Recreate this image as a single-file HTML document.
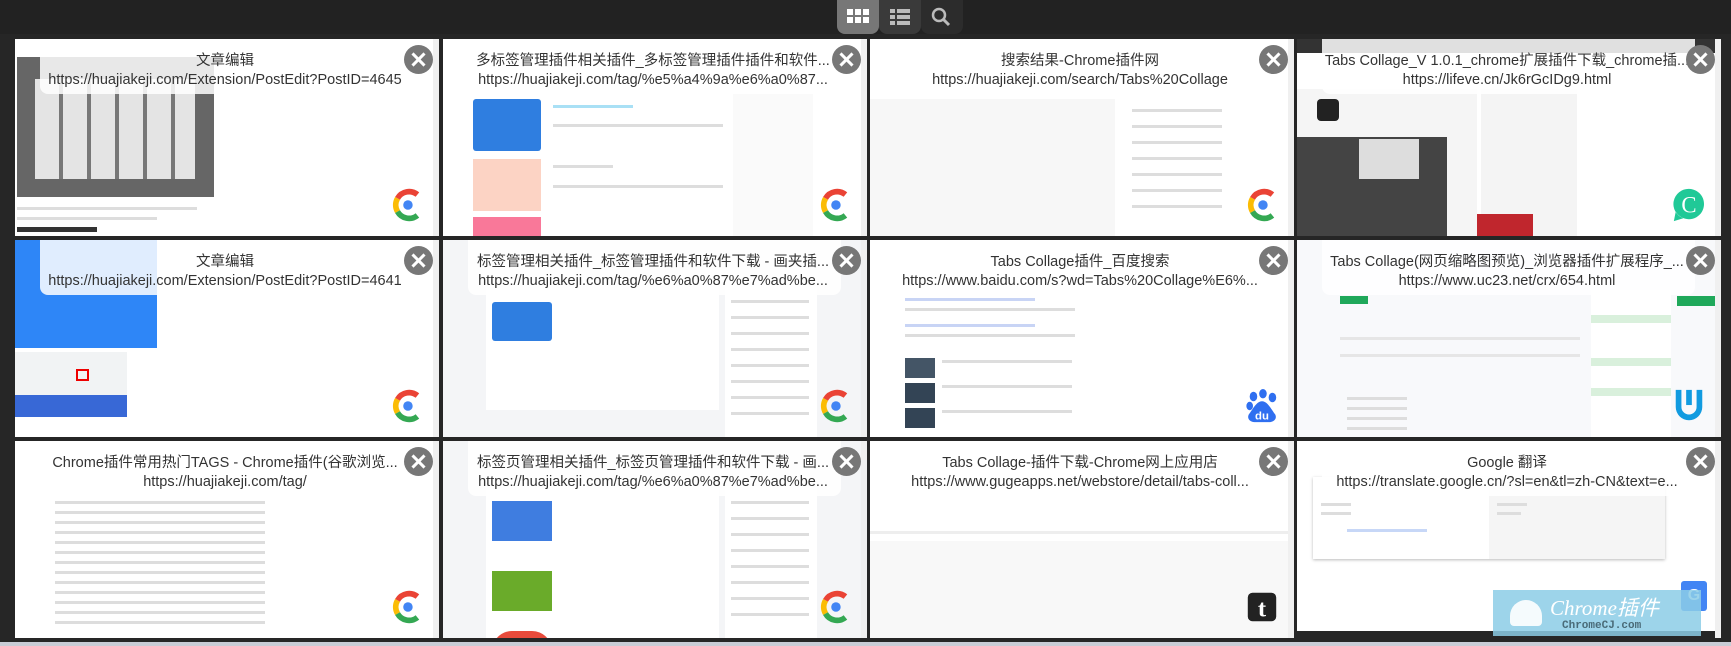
<!DOCTYPE html>
<html><head><meta charset="utf-8">
<style>
*{margin:0;padding:0;box-sizing:border-box}
body{width:1731px;height:646px;background:#262626;position:relative;overflow:hidden;font-family:"Liberation Sans","Noto Sans CJK SC",sans-serif}
.top{position:absolute;left:0;top:0;width:1731px;height:34px;background:#222}
.btn{position:absolute;top:0;height:34px;width:42px;border-radius:0 0 8px 8px}
.cell{position:absolute;width:424px;height:197px;background:#fff;overflow:hidden}
.tb{position:absolute;left:25px;top:0;width:373px;height:55px;background:rgba(255,255,255,.85);border-radius:0 0 8px 8px}
.t1,.t2{position:absolute;left:18px;width:384px;text-align:center;white-space:nowrap;overflow:hidden;color:#333;font-size:14.5px;line-height:18px}
.t1{top:13px}.t2{top:32px}
.x{position:absolute;right:6px;top:6px;width:29px;height:29px;border-radius:50%;background:#777}
.x:before,.x:after{content:"";position:absolute;left:6px;top:13px;width:17px;height:3px;background:#fff;transform:rotate(45deg)}
.x:after{transform:rotate(-45deg)}
.fav{position:absolute;right:14px;bottom:13px;width:36px;height:36px}
.r{position:absolute}
.ln{position:absolute;height:3px;background:#ddd}
.sb{position:absolute;right:0;top:0;width:6px;height:197px;background:#f0f0f0}
</style></head><body>
<div class="top"></div>
<div class="btn" style="left:837px;background:#777">
<svg width="42" height="34"><g fill="#fff"><rect x="10" y="9" width="6" height="6"/><rect x="18" y="9" width="6" height="6"/><rect x="26" y="9" width="6" height="6"/><rect x="10" y="17" width="6" height="6"/><rect x="18" y="17" width="6" height="6"/><rect x="26" y="17" width="6" height="6"/></g></svg></div>
<div class="btn" style="left:879px;background:#3a3a3a">
<svg width="42" height="34"><g fill="#bbb"><rect x="11" y="9" width="5" height="4"/><rect x="18" y="9" width="13" height="4"/><rect x="11" y="15" width="5" height="4"/><rect x="18" y="15" width="13" height="4"/><rect x="11" y="21" width="5" height="4"/><rect x="18" y="21" width="13" height="4"/></g></svg></div>
<div class="btn" style="left:921px;background:#2c2c2c">
<svg width="42" height="34"><circle cx="18" cy="15" r="6" fill="none" stroke="#bbb" stroke-width="2.5"/><line x1="22" y1="19" x2="28" y2="25" stroke="#bbb" stroke-width="3"/></svg></div>

<svg width="0" height="0" style="position:absolute"><defs>
<g id="chr"><path d="M29 8 A14 14 0 0 0 8 12" fill="none" stroke="#ea4335" stroke-width="6"/><path d="M8 12 A14 14 0 0 0 8 26" fill="none" stroke="#fbbc05" stroke-width="6"/><path d="M8 26 A14 14 0 0 0 29 30" fill="none" stroke="#34a853" stroke-width="6"/><circle cx="19" cy="19" r="5" fill="#4285f4"/></g>
</defs></svg>

<!-- row 1 -->
<div class="cell" style="left:15px;top:39px">
<div class="r" style="left:2px;top:18px;width:197px;height:140px;background:#666"></div>
<div class="r" style="left:20px;top:40px;width:160px;height:100px;background:repeating-linear-gradient(90deg,#e4e4e4 0 24px,#777 24px 28px),#ddd"></div>
<div class="ln" style="left:2px;top:168px;width:180px"></div><div class="ln" style="left:2px;top:178px;width:140px"></div><div class="r" style="left:2px;top:188px;width:80px;height:5px;background:#333"></div>
<div class="tb"></div><div class="t1">文章编辑</div><div class="t2">https://huajiakeji.com/Extension/PostEdit?PostID=4645</div>
<div class="sb"></div><div class="x"></div><svg class="fav" viewBox="0 0 36 38"><use href="#chr"/></svg></div>

<div class="cell" style="left:443px;top:39px">
<div class="r" style="left:30px;top:60px;width:68px;height:52px;background:#2f7ee0;border-radius:3px"></div>
<div class="r" style="left:30px;top:120px;width:68px;height:52px;background:#fcd3c4"></div>
<div class="r" style="left:30px;top:178px;width:68px;height:30px;background:#f97899"></div>
<div class="ln" style="left:110px;top:66px;width:80px;background:#a9e0f5"></div><div class="ln" style="left:110px;top:85px;width:170px"></div><div class="ln" style="left:110px;top:126px;width:60px"></div><div class="ln" style="left:110px;top:146px;width:170px"></div>
<div class="r" style="left:290px;top:0;width:80px;height:197px;background:#fafafa"></div>
<div class="tb"></div><div class="t1">多标签管理插件相关插件_多标签管理插件插件和软件...</div><div class="t2">https://huajiakeji.com/tag/%e5%a4%9a%e6%a0%87...</div>
<div class="sb"></div><div class="x"></div><svg class="fav" viewBox="0 0 36 38"><use href="#chr"/></svg></div>

<div class="cell" style="left:870px;top:39px">
<div class="r" style="left:0;top:60px;width:245px;height:137px;background:#f7f7f7"></div>
<div class="ln" style="left:262px;top:70px;width:90px"></div><div class="ln" style="left:262px;top:86px;width:90px"></div><div class="ln" style="left:262px;top:102px;width:90px"></div><div class="ln" style="left:262px;top:118px;width:90px"></div><div class="ln" style="left:262px;top:134px;width:90px"></div><div class="ln" style="left:262px;top:150px;width:90px"></div><div class="ln" style="left:262px;top:166px;width:90px"></div>
<div class="tb"></div><div class="t1">搜索结果-Chrome插件网</div><div class="t2">https://huajiakeji.com/search/Tabs%20Collage</div>
<div class="sb"></div><div class="x"></div><svg class="fav" viewBox="0 0 36 38"><use href="#chr"/></svg></div>

<div class="cell" style="left:1297px;top:39px">
<div class="r" style="left:0;top:0;width:424px;height:14px;background:#333"></div>
<div class="r" style="left:0;top:50px;width:180px;height:147px;background:#f5f5f5"></div>
<div class="r" style="left:0;top:98px;width:150px;height:99px;background:#444"></div>
<div class="r" style="left:62px;top:100px;width:60px;height:40px;background:#ddd"></div>
<div class="r" style="left:184px;top:50px;width:96px;height:147px;background:#f4f4f4"></div>
<div class="r" style="left:20px;top:60px;width:22px;height:22px;background:#222;border-radius:4px"></div>
<div class="tb"></div><div class="t1">Tabs Collage_V 1.0.1_chrome扩展插件下载_chrome插...</div><div class="t2">https://lifeve.cn/Jk6rGcIDg9.html</div>
<div class="sb" style="background:#f0f0f0"></div><div class="x"></div>
<svg class="fav" viewBox="0 0 36 38"><path d="M18 2a16 16 0 1 1-14 24l-2 10 10-3A16 16 0 0 1 18 2z" fill="#20c997"/><text x="18" y="27" font-size="24" fill="#fff" text-anchor="middle" font-family="Liberation Serif">C</text></svg>
<div class="r" style="left:180px;top:175px;width:56px;height:22px;background:#c0262d"></div></div>

<!-- row 2 -->
<div class="cell" style="left:15px;top:240px">
<div class="r" style="left:0;top:0;width:142px;height:108px;background:#2e86f7"></div>
<div class="r" style="left:0;top:112px;width:112px;height:50px;background:#f1f3f4"></div>
<div class="r" style="left:61px;top:129px;width:13px;height:12px;border:2px solid #e00"></div>
<div class="r" style="left:0;top:155px;width:112px;height:22px;background:#3868d6"></div>
<div class="tb"></div><div class="t1">文章编辑</div><div class="t2">https://huajiakeji.com/Extension/PostEdit?PostID=4641</div>
<div class="sb"></div><div class="x"></div><svg class="fav" viewBox="0 0 36 38"><use href="#chr"/></svg></div>

<div class="cell" style="left:443px;top:240px;background:#f4f5f7">
<div class="r" style="left:43px;top:40px;width:233px;height:130px;background:#fff"></div>
<div class="r" style="left:49px;top:62px;width:60px;height:39px;background:#2f7ee0;border-radius:3px"></div>
<div class="r" style="left:282px;top:40px;width:92px;height:157px;background:#fff"></div>
<div class="ln" style="left:288px;top:60px;width:78px"></div><div class="ln" style="left:288px;top:76px;width:78px"></div><div class="ln" style="left:288px;top:92px;width:78px"></div><div class="ln" style="left:288px;top:108px;width:78px"></div><div class="ln" style="left:288px;top:124px;width:78px"></div><div class="ln" style="left:288px;top:140px;width:78px"></div><div class="ln" style="left:288px;top:156px;width:78px"></div><div class="ln" style="left:288px;top:172px;width:78px"></div>
<div class="tb"></div><div class="t1">标签管理相关插件_标签管理插件和软件下载 - 画夹插...</div><div class="t2">https://huajiakeji.com/tag/%e6%a0%87%e7%ad%be...</div>
<div class="sb"></div><div class="x"></div><svg class="fav" viewBox="0 0 36 38"><use href="#chr"/></svg></div>

<div class="cell" style="left:870px;top:240px">
<div class="ln" style="left:35px;top:58px;width:130px;background:#c8d4f5"></div><div class="ln" style="left:35px;top:68px;width:170px"></div><div class="ln" style="left:35px;top:84px;width:130px;background:#c8d4f5"></div><div class="ln" style="left:35px;top:94px;width:170px"></div>
<div class="r" style="left:35px;top:118px;width:30px;height:20px;background:#456"></div><div class="r" style="left:35px;top:143px;width:30px;height:20px;background:#345"></div><div class="r" style="left:35px;top:168px;width:30px;height:20px;background:#345"></div>
<div class="ln" style="left:72px;top:120px;width:130px"></div><div class="ln" style="left:72px;top:145px;width:130px"></div><div class="ln" style="left:72px;top:170px;width:130px"></div>
<div class="tb"></div><div class="t1">Tabs Collage插件_百度搜索</div><div class="t2">https://www.baidu.com/s?wd=Tabs%20Collage%E6%...</div>
<div class="sb"></div><div class="x"></div>
<svg class="fav" viewBox="0 0 36 38"><g fill="#2f6ff0"><ellipse cx="9" cy="9" rx="4" ry="5"/><ellipse cx="19" cy="6" rx="4" ry="5"/><ellipse cx="29" cy="10" rx="4" ry="5"/><ellipse cx="5" cy="19" rx="3.5" ry="4.5"/><path d="M18 14c-6 0-10 9-14 14-2 4 1 8 6 8h16c5 0 8-4 6-8-4-5-8-14-14-14z"/></g><text x="18" y="33" font-size="12" font-weight="bold" fill="#fff" text-anchor="middle">du</text></svg></div>

<div class="cell" style="left:1297px;top:240px;background:#f8f9fb">
<div class="r" style="left:43px;top:56px;width:28px;height:8px;background:#1fa85a"></div>
<div class="ln" style="left:43px;top:97px;width:240px;background:#e6e6e6"></div><div class="ln" style="left:43px;top:114px;width:240px;background:#e6e6e6"></div>
<div class="ln" style="left:50px;top:157px;width:60px"></div><div class="ln" style="left:50px;top:167px;width:60px"></div><div class="ln" style="left:50px;top:177px;width:60px"></div><div class="ln" style="left:50px;top:187px;width:60px"></div>
<div class="r" style="left:294px;top:50px;width:80px;height:147px;background:#fff"></div>
<div class="r" style="left:294px;top:75px;width:80px;height:8px;background:#d9f0dc"></div><div class="r" style="left:294px;top:118px;width:80px;height:8px;background:#d9f0dc"></div><div class="r" style="left:294px;top:148px;width:80px;height:8px;background:#d9f0dc"></div>
<div class="r" style="left:380px;top:56px;width:38px;height:10px;background:#1fa85a"></div>
<div class="tb"></div><div class="t1">Tabs Collage(网页缩略图预览)_浏览器插件扩展程序_...</div><div class="t2">https://www.uc23.net/crx/654.html</div>
<div class="sb"></div><div class="x"></div>
<svg class="fav" viewBox="0 0 36 38"><path d="M4 2v18a14 14 0 0 0 28 0V2h-6v18a8 8 0 0 1-16 0V2z" fill="#119be0"/><path d="M15 2v16h6V2z" fill="#119be0"/></svg></div>

<!-- row 3 -->
<div class="cell" style="left:15px;top:441px">
<div class="ln" style="left:40px;top:60px;width:210px"></div><div class="ln" style="left:40px;top:70px;width:210px"></div><div class="ln" style="left:40px;top:80px;width:210px"></div><div class="ln" style="left:40px;top:90px;width:210px"></div><div class="ln" style="left:40px;top:100px;width:210px"></div><div class="ln" style="left:40px;top:110px;width:210px"></div><div class="ln" style="left:40px;top:120px;width:210px"></div><div class="ln" style="left:40px;top:130px;width:210px"></div><div class="ln" style="left:40px;top:140px;width:210px"></div><div class="ln" style="left:40px;top:150px;width:210px"></div><div class="ln" style="left:40px;top:160px;width:210px"></div><div class="ln" style="left:40px;top:170px;width:210px"></div><div class="ln" style="left:40px;top:180px;width:210px"></div>
<div class="tb"></div><div class="t1">Chrome插件常用热门TAGS - Chrome插件(谷歌浏览...</div><div class="t2">https://huajiakeji.com/tag/</div>
<div class="sb"></div><div class="x"></div><svg class="fav" viewBox="0 0 36 38"><use href="#chr"/></svg></div>

<div class="cell" style="left:443px;top:441px;background:#f4f5f7">
<div class="r" style="left:43px;top:45px;width:233px;height:152px;background:#fff"></div>
<div class="r" style="left:49px;top:60px;width:60px;height:40px;background:#3f7de0"></div>
<div class="r" style="left:49px;top:130px;width:60px;height:40px;background:#6aab2a"></div>
<div class="r" style="left:49px;top:190px;width:60px;height:20px;background:#e84a3b;border-radius:30px 30px 0 0"></div>
<div class="r" style="left:282px;top:45px;width:92px;height:152px;background:#fff"></div>
<div class="ln" style="left:288px;top:60px;width:78px"></div><div class="ln" style="left:288px;top:76px;width:78px"></div><div class="ln" style="left:288px;top:92px;width:78px"></div><div class="ln" style="left:288px;top:108px;width:78px"></div><div class="ln" style="left:288px;top:124px;width:78px"></div><div class="ln" style="left:288px;top:140px;width:78px"></div><div class="ln" style="left:288px;top:156px;width:78px"></div><div class="ln" style="left:288px;top:172px;width:78px"></div>
<div class="tb"></div><div class="t1">标签页管理相关插件_标签页管理插件和软件下载 - 画...</div><div class="t2">https://huajiakeji.com/tag/%e6%a0%87%e7%ad%be...</div>
<div class="sb"></div><div class="x"></div><svg class="fav" viewBox="0 0 36 38"><use href="#chr"/></svg></div>

<div class="cell" style="left:870px;top:441px">
<div class="r" style="left:0;top:100px;width:424px;height:97px;background:#f8f8f8"></div>
<div class="ln" style="left:0;top:90px;width:424px;background:#eee"></div>
<div class="tb"></div><div class="t1">Tabs Collage-插件下载-Chrome网上应用店</div><div class="t2">https://www.gugeapps.net/webstore/detail/tabs-coll...</div>
<div class="sb"></div><div class="x"></div>
<svg class="fav" viewBox="0 0 36 38"><rect x="3" y="4" width="30" height="30" rx="5" fill="#222"/><text x="18" y="29" font-size="26" font-weight="bold" fill="#fff" text-anchor="middle" font-family="Liberation Serif">t</text></svg></div>

<div class="cell" style="left:1297px;top:441px">
<div class="r" style="left:16px;top:36px;width:352px;height:82px;background:#fff;box-shadow:0 1px 3px #bbb"></div>
<div class="r" style="left:192px;top:36px;width:176px;height:82px;background:#f5f5f5"></div>
<div class="ln" style="left:24px;top:62px;width:30px"></div><div class="ln" style="left:24px;top:71px;width:30px"></div><div class="ln" style="left:200px;top:62px;width:30px"></div><div class="ln" style="left:200px;top:71px;width:24px"></div>
<div class="ln" style="left:50px;top:88px;width:80px;background:#c7d7f7"></div>
<div class="r" style="left:0;top:190px;width:424px;height:7px;background:#262626"></div>
<div class="tb"></div><div class="t1">Google 翻译</div><div class="t2">https://translate.google.cn/?sl=en&amp;tl=zh-CN&amp;text=e...</div>
<div class="sb"></div><div class="x"></div>
<div class="r" style="left:384px;top:140px;width:26px;height:30px;background:#4285f4;border-radius:3px;color:#fff;font-size:16px;font-weight:bold;text-align:center;line-height:30px">G</div></div>

<div class="r" style="left:1493px;top:590px;width:208px;height:46px;background:rgba(140,205,230,.85)"></div>
<div class="r" style="left:1510px;top:600px;width:32px;height:26px;background:#fff;border-radius:16px 16px 4px 4px;opacity:.9"></div>
<div class="r" style="left:1550px;top:592px;font-size:21px;font-style:italic;color:#fff;font-family:'Liberation Serif','Noto Sans CJK SC',serif">Chrome插件</div>
<div class="r" style="left:1562px;top:620px;font-size:11px;font-weight:bold;color:#4a6b78;font-family:'Liberation Mono',monospace">ChromeCJ.com</div>
<div class="r" style="left:0;top:642px;width:1731px;height:4px;background:#c9cdd6"></div>
</body></html>
